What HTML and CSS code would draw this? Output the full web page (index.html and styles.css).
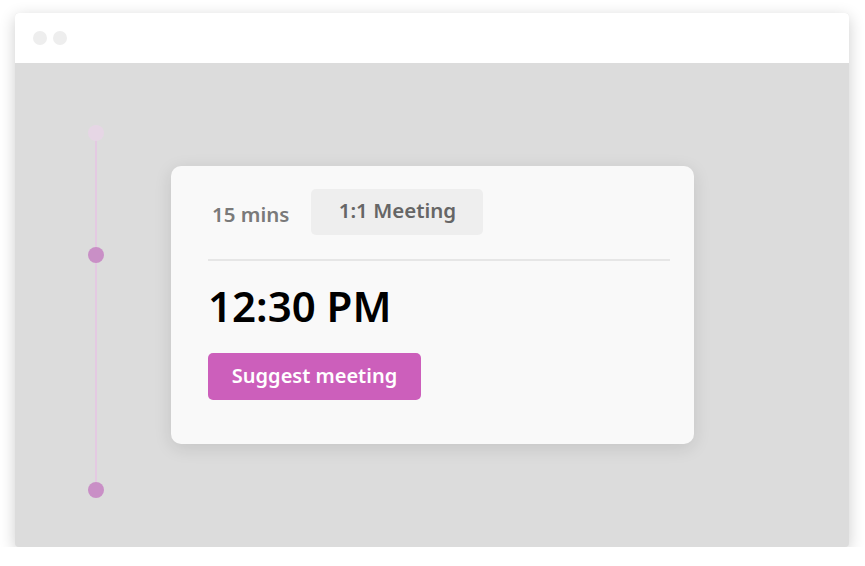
FILE: index.html
```html
<!DOCTYPE html>
<html>
<head>
<meta charset="utf-8">
<link rel="stylesheet" href="styles.css">
</head>
<body>
<div class="window">
  <div class="titlebar">
    <span class="wdot"></span>
    <span class="wdot"></span>
  </div>
  <div class="content">
    <div class="timeline">
      <span class="tdot tdot-light"></span>
      <span class="tdot tdot-mid"></span>
      <span class="tdot tdot-end"></span>
    </div>
    <div class="card">
      <div class="card-head">
        <span class="duration">15 mins</span>
        <span class="pill">1:1 Meeting</span>
      </div>
      <div class="divider"></div>
      <div class="time">12:30 PM</div>
      <button class="suggest">Suggest meeting</button>
    </div>
  </div>
</div>
</body>
</html>
```
FILE: styles.css
```css
html, body {
  margin: 0;
  padding: 0;
  background: #ffffff;
  font-family: "Noto Sans", "Inter", sans-serif;
}
body {
  padding: 13px 0 0 15px;
}
.window {
  width: 834px;
  height: 534px;
  border-radius: 4px;
  overflow: hidden;
  background: #dcdcdc;
  box-shadow: 0 4px 16px rgba(0,0,0,0.2);
  display: flex;
  flex-direction: column;
}
.titlebar {
  height: 50px;
  background: #ffffff;
  display: flex;
  align-items: center;
  gap: 6px;
  padding-left: 18px;
  flex-shrink: 0;
}
.wdot {
  width: 14px;
  height: 14px;
  border-radius: 50%;
  background: #eeeeee;
}
.content {
  flex: 1;
  display: flex;
  position: relative;
}
.timeline {
  position: absolute;
  left: 73px;
  top: 62px;
  width: 16px;
  height: 365px;
}
.timeline::before {
  content: "";
  position: absolute;
  left: 7px;
  top: 14px;
  bottom: 8px;
  width: 2px;
  background: #e4c9e2;
  z-index: 0;
}
.tdot {
  position: absolute;
  left: 0;
  width: 16px;
  height: 16px;
  border-radius: 50%;
  z-index: 1;
}
.tdot-light { top: 0; background: #e6d6e5; }
.tdot-mid { top: 122px; background: #c98fc6; }
.tdot-end { top: 357px; background: #c98fc6; }
.card {
  margin: 103px 0 0 156px;
  width: 523px;
  height: 278px;
  box-sizing: border-box;
  background: #f9f9f9;
  border-radius: 10px;
  box-shadow: 0 4px 18px rgba(0,0,0,0.11);
  padding: 23px 24px 0 37px;
  display: flex;
  flex-direction: column;
  align-items: flex-start;
}
.card-head {
  display: flex;
  align-items: flex-start;
  gap: 22px;
}
.duration {
  font-size: 20.5px;
  font-weight: 600;
  color: #7a7a7a;
  line-height: 28px;
  margin-top: 11px;
  padding-left: 4px;
}
.pill {
  width: 172px;
  height: 46px;
  box-sizing: border-box;
  background: #eeeeee;
  border-radius: 5px;
  text-align: center;
  padding-top: 7px;
  line-height: 28px;
  font-size: 20.5px;
  font-weight: 600;
  color: #666666;
}
.divider {
  align-self: stretch;
  height: 2px;
  background: #e6e6e6;
  margin-top: 24px;
}
.time {
  margin-top: 19px;
  font-size: 42px;
  font-weight: 600;
  color: #000000;
  line-height: 52px;
}
.suggest {
  margin-top: 21px;
  width: 213px;
  height: 47px;
  border: none;
  border-radius: 5px;
  background: #cc5fbb;
  color: #ffffff;
  font-family: "Noto Sans", "Inter", sans-serif;
  font-size: 20px;
  font-weight: 600;
  padding: 0 0 2px 0;
}
```
